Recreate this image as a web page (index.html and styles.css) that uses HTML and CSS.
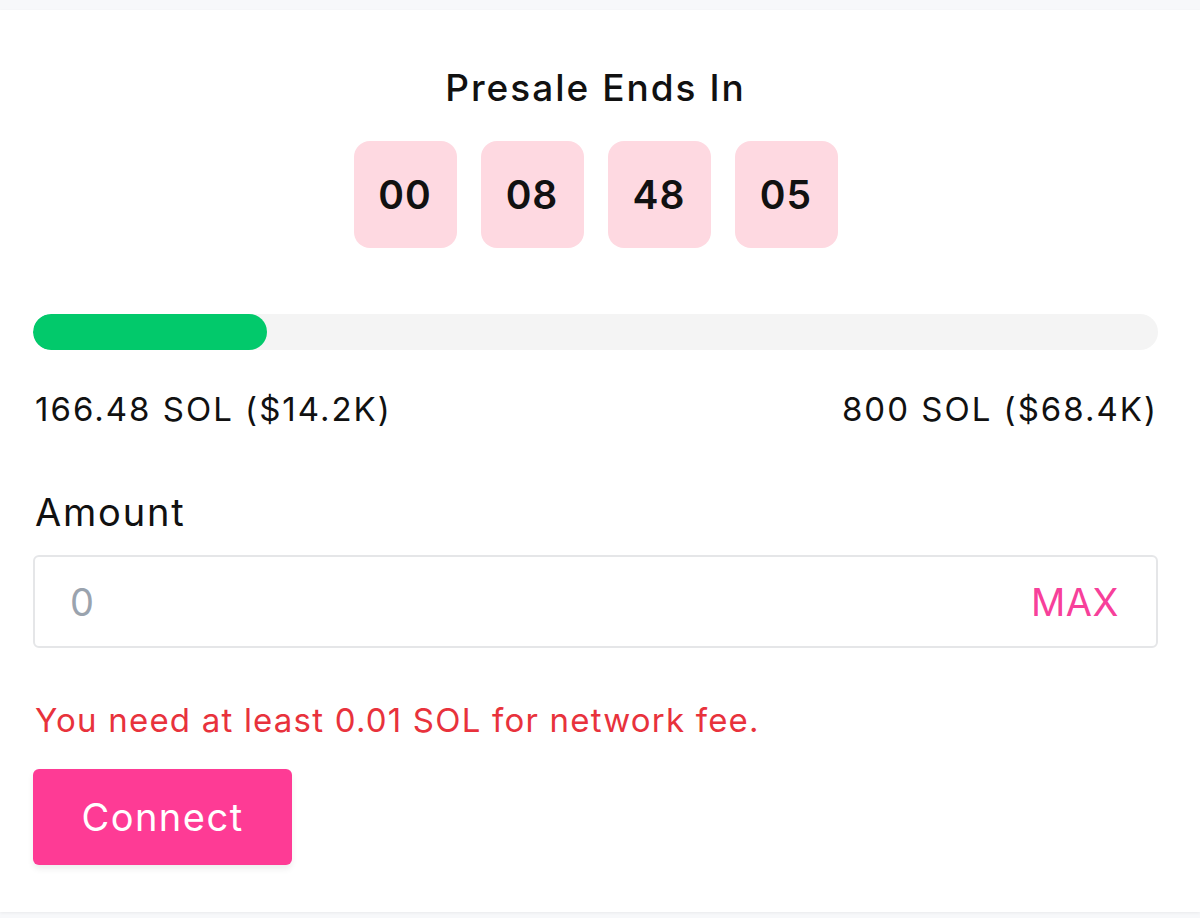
FILE: index.html
```html
<!DOCTYPE html>
<html lang="en">
<head>
<meta charset="utf-8">
<title>Presale</title>
<link rel="stylesheet" href="styles.css">
</head>
<body>
<div class="card">
  <h2 class="title">Presale Ends In</h2>
  <div class="timer">
    <div class="cell">00</div>
    <div class="cell">08</div>
    <div class="cell">48</div>
    <div class="cell">05</div>
  </div>
  <div class="bar"><div class="fill" style="width: 20.81%"></div></div>
  <div class="stats">
    <span>166.48 SOL ($14.2K)</span>
    <span>800 SOL ($68.4K)</span>
  </div>
  <label class="label" for="amt">Amount</label>
  <div class="field">
    <input id="amt" class="input" type="text" placeholder="0">
    <span class="max">MAX</span>
  </div>
  <p class="error">You need at least 0.01 SOL for network fee.</p>
  <button class="btn">Connect</button>
</div>
</body>
</html>
```
FILE: styles.css
```css
html, body {
  margin: 0;
  padding: 0;
}
body {
  background: #f7f8fa;
  font-family: Inter, "Noto Sans", "Liberation Sans", sans-serif;
  color: #111;
  height: 918px;
  overflow: hidden;
}
.card {
  margin-top: 10px;
  background: #fff;
  padding: 56px 42px 47px 33px;
  box-shadow: 0 1px 3px rgba(0,0,0,0.06);
  display: flex;
  flex-direction: column;
  height: 902px;
  box-sizing: border-box;
}
.title {
  margin: 0;
  font-size: 37px;
  line-height: 44px;
  font-weight: 500;
  letter-spacing: 2px;
  text-align: center;
}
.timer {
  display: flex;
  justify-content: center;
  gap: 24px;
  margin-top: 31px;
}
.cell {
  width: 103px;
  height: 107px;
  border-radius: 16px;
  background: #fed9e1;
  display: flex;
  align-items: center;
  justify-content: center;
  font-size: 39px;
  font-weight: 600;
  letter-spacing: 1px;
}
.bar {
  margin-top: 66px;
  height: 36px;
  border-radius: 18px;
  background: #f4f4f4;
  overflow: hidden;
}
.fill {
  height: 100%;
  background: #02c96b;
  border-radius: 18px;
}
.stats {
  margin-top: 39px;
  display: flex;
  justify-content: space-between;
  font-size: 33px;
  line-height: 40px;
  letter-spacing: 2px;
  padding: 0 0 0 2px;
}
.label {
  margin-top: 60px;
  font-size: 38px;
  line-height: 46px;
  letter-spacing: 1.8px;
  padding-left: 2px;
}
.field {
  margin-top: 20px;
  height: 93px;
  box-sizing: border-box;
  border: 2px solid #e5e6e8;
  border-radius: 6px;
  display: flex;
  align-items: center;
  padding: 0 37px 0 35px;
}
.input {
  flex: 1;
  border: 0;
  outline: none;
  font-family: inherit;
  font-size: 38px;
  color: #111;
  background: transparent;
  padding: 0;
}
.input::placeholder {
  color: #9aa3ae;
}
.max {
  color: #f7409a;
  font-size: 38px;
  letter-spacing: 0.5px;
}
.error {
  margin: 52px 0 0;
  color: #e8323c;
  font-size: 33px;
  line-height: 40px;
  letter-spacing: 1.2px;
  padding-left: 2px;
}
.btn {
  margin-top: 29px;
  align-self: flex-start;
  width: 259px;
  height: 96px;
  border: 0;
  border-radius: 6px;
  background: #fe3b95;
  color: #fff;
  font-family: inherit;
  font-size: 38px;
  letter-spacing: 1.5px;
  box-shadow: 0 4px 6px rgba(0,0,0,0.07);
}
```
